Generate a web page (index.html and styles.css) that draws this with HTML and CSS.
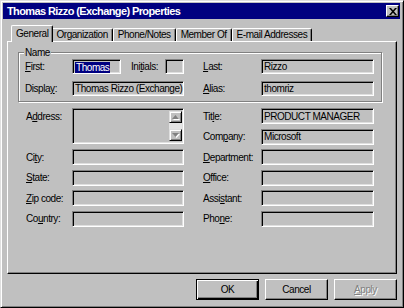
FILE: index.html
```html
<!DOCTYPE html>
<html>
<head>
<meta charset="utf-8">
<link rel="stylesheet" href="styles.css">
</head>
<body>
<div class="window">
  <div class="titlebar">
    <span class="title">Thomas Rizzo (Exchange) Properties</span>
    <span class="close"><svg width="8" height="7" viewBox="0 0 8 7"><path d="M0 0h2l2 2.3L6 0h2L5 3.5 8 7H6L4 4.7 2 7H0l3-3.5z" fill="#000"/></svg></span>
  </div>
  <div class="tabs">
    <div class="tab active">General</div>
    <div class="tab">Organization</div>
    <div class="tab">Phone/Notes</div>
    <div class="tab">Member Of</div>
    <div class="tab">E-mail Addresses</div>
  </div>
  <div class="panel">
    <fieldset class="group">
      <legend>Name</legend>
      <div class="name-grid">
        <span class="lbl"><u>F</u>irst:</span>
        <div class="field"><span class="sel">Thomas</span></div>
        <span class="lbl ini-lbl">Ini<u>t</u>ials:</span>
        <div class="field"></div>
        <span class="lbl rl"><u>L</u>ast:</span>
        <div class="field">Rizzo</div>
        <span class="lbl">Displa<u>y</u>:</span>
        <div class="field span3">Thomas Rizzo (Exchange)</div>
        <span class="lbl rl"><u>A</u>lias:</span>
        <div class="field">thomriz</div>
      </div>
    </fieldset>
    <div class="addr-grid">
      <span class="lbl ll top">A<u>d</u>dress:</span>
      <div class="field lf address">
        <div class="scroll">
          <div class="sbtn"><svg width="7" height="4" viewBox="0 0 7 4"><path d="M3.5 0L7 4H0z" fill="#808080"/></svg></div>
          <div class="strack"></div>
          <div class="sbtn"><svg width="7" height="4" viewBox="0 0 7 4"><path d="M0 0h7L3.5 4z" fill="#808080"/></svg></div>
        </div>
      </div>
      <span class="lbl rl">Tit<u>l</u>e:</span>
      <div class="field rf">PRODUCT MANAGER</div>
      <span class="lbl rl">Com<u>p</u>any:</span>
      <div class="field rf">Microsoft</div>
      <span class="lbl ll">Ci<u>t</u>y:</span>
      <div class="field lf"></div>
      <span class="lbl rl"><u>D</u>epartment:</span>
      <div class="field rf"></div>
      <span class="lbl ll"><u>S</u>tate:</span>
      <div class="field lf"></div>
      <span class="lbl rl"><u>O</u>ffice:</span>
      <div class="field rf"></div>
      <span class="lbl ll"><u>Z</u>ip code:</span>
      <div class="field lf"></div>
      <span class="lbl rl">Assi<u>s</u>tant:</span>
      <div class="field rf"></div>
      <span class="lbl ll">Co<u>u</u>ntry:</span>
      <div class="field lf"></div>
      <span class="lbl rl">Pho<u>n</u>e:</span>
      <div class="field rf"></div>
    </div>
  </div>
  <div class="buttons">
    <div class="btn default">OK</div>
    <div class="btn">Cancel</div>
    <div class="btn disabled"><u>A</u>pply</div>
  </div>
</div>
</body>
</html>
```

FILE: styles.css
```css
* { box-sizing: border-box; }
html, body { margin: 0; padding: 0; background: #c0c0c0; }
body {
  font-family: "Liberation Sans", Arial, sans-serif;
  font-size: 10px;
  letter-spacing: -0.45px;
  color: #000;
}
.window {
  width: 404px;
  height: 308px;
  background: #c0c0c0;
  border: 1px solid;
  border-color: #dfdfdf #000 #000 #dfdfdf;
  box-shadow: inset 1px 1px 0 #fff, inset -1px -1px 0 #808080;
  padding: 2px 3px 0 2px;
  display: flex;
  flex-direction: column;
}
.titlebar {
  height: 16px;
  background: #000080;
  color: #fff;
  display: flex;
  align-items: center;
  justify-content: space-between;
  padding: 0 1px 0 4px;
}
.title {
  font-weight: bold;
  font-size: 11px;
  letter-spacing: -0.6px;
  line-height: 16px;
}
.close {
  width: 13px;
  height: 12px;
  background: #c0c0c0;
  border: 1px solid;
  border-color: #fff #000 #000 #fff;
  box-shadow: inset -1px -1px 0 #808080;
  display: flex;
  align-items: center;
  justify-content: center;
}
.close svg { display: block; }
.tabs {
  display: flex;
  align-items: flex-end;
  height: 16px;
  margin-top: 6px;
  padding-left: 10px;
  position: relative;
  z-index: 1;
}
.tab {
  height: 13px;
  padding: 0 4px 0 4px;
  line-height: 12px;
  border-top: 1px solid #fff;
  border-left: 1px solid #fff;
  border-right: 1px solid #000;
  border-top-left-radius: 2px;
  border-top-right-radius: 2px;
  box-shadow: inset -1px 0 0 #808080;
  background: #c0c0c0;
}
.tab.active {
  height: 17px;
  margin: 0 -2px -1px -2px;
  padding: 2px 4px 0 4px;
  line-height: 12px;
  position: relative;
  z-index: 2;
}
.panel {
  margin-left: 4px;
  width: 390px;
  height: 233px;
  border: 1px solid;
  border-color: #fff #000 #000 #fff;
  box-shadow: inset -1px -1px 0 #808080;
  padding: 4px 0 0 10px;
}
.group {
  margin: 0;
  width: 364px;
  height: 56px;
  border: 1px solid #808080;
  box-shadow: 1px 1px 0 #fff, inset 1px 1px 0 #fff;
  padding: 0 0 0 6px;
}
.group legend {
  padding: 0 1px;
  margin-left: -1px;
  background: #c0c0c0;
  line-height: 13px;
}
.name-grid {
  display: grid;
  grid-template-columns: 47px 49px 44px 19px 77px 113px;
  grid-template-rows: 15px 15px;
  row-gap: 7px;
  align-items: center;
}
.ini-lbl { padding-left: 10px; }
.rl { padding-left: 19px; }
.span3 { grid-column: span 3; }
.lbl { white-space: nowrap; line-height: 13px; }
.lbl.top { align-self: start; padding-top: 2px; }
.field {
  height: 15px;
  border: 1px solid;
  border-color: #808080 #fff #fff #808080;
  box-shadow: inset 1px 1px 0 #000, inset -1px -1px 0 #dfdfdf;
  padding: 1px 0 0 2px;
  line-height: 12px;
  white-space: nowrap;
  overflow: hidden;
  display: flex;
  align-items: center;
}
.sel {
  background: #000080;
  color: #fff;
  padding: 0 1px;
  line-height: 11px;
}
.addr-grid {
  margin-top: 6px;
  margin-left: 8px;
  display: grid;
  grid-template-columns: 46px 112px 77px 113px;
  grid-template-rows: repeat(6, 16px);
  row-gap: 4.5px;
  align-items: center;
}
.addr-grid .field { height: 16px; }
.addr-grid .ll { grid-column: 1; }
.addr-grid .lf { grid-column: 2; }
.addr-grid .rl { grid-column: 3; }
.addr-grid .rf { grid-column: 4; }
.addr-grid .field.address {
  grid-row: span 2;
  height: 36px;
  align-self: start;
  padding: 2px 1px 2px 2px;
  justify-content: flex-end;
  align-items: stretch;
}
.scroll {
  width: 13px;
  display: flex;
  flex-direction: column;
}
.sbtn {
  height: 12px;
  background: #c0c0c0;
  border: 1px solid;
  border-color: #dfdfdf #000 #000 #dfdfdf;
  box-shadow: inset 1px 1px 0 #fff, inset -1px -1px 0 #808080;
  display: flex;
  align-items: center;
  justify-content: center;
}
.sbtn svg { display: block; filter: drop-shadow(1px 1px 0 #fff); }
.strack { flex: 1; background: #e4e4e4; }
.buttons {
  display: flex;
  justify-content: flex-end;
  gap: 6px;
  margin-top: 5px;
  margin-right: 3px;
}
.btn {
  width: 63px;
  height: 21px;
  border: 1px solid;
  border-color: #fff #000 #000 #fff;
  box-shadow: inset -1px -1px 0 #808080;
  display: flex;
  align-items: center;
  justify-content: center;
  line-height: 12px;
}
.btn.default {
  border: 1px solid #000;
  box-shadow: inset 1px 1px 0 #fff, inset -1px -1px 0 #000, inset -2px -2px 0 #808080;
}
.btn.disabled {
  color: #808080;
  text-shadow: 1px 1px 0 #fff;
}
```
